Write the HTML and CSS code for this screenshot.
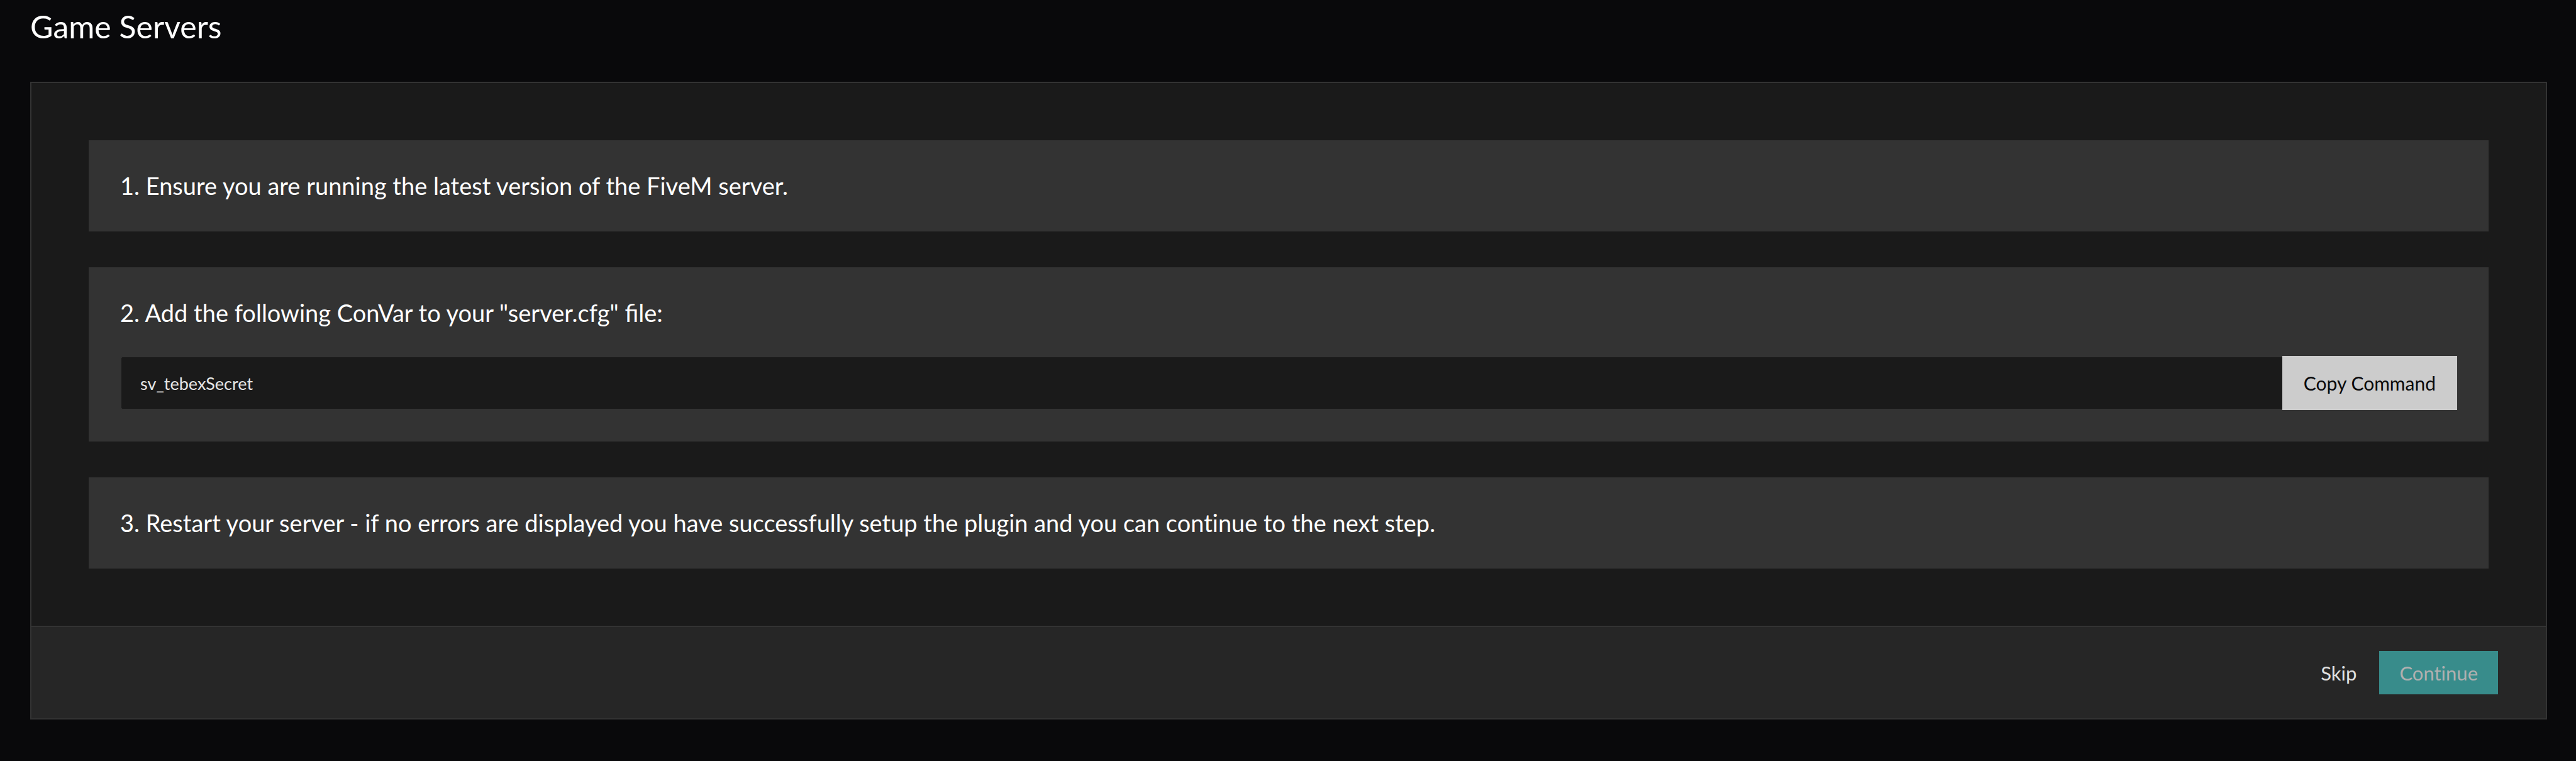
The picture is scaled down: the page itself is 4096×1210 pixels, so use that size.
FILE: index.html
```html
<!DOCTYPE html>
<html lang="en">
<head>
<meta charset="utf-8">
<title>Game Servers</title>
<link rel="stylesheet" href="styles.css">
</head>
<body>
<main class="page">
  <h1 class="page-title">Game Servers</h1>
  <section class="card">
    <div class="card-body">
      <div class="step">
        <p class="step-text">1. Ensure you are running the latest version of the FiveM server.</p>
      </div>
      <div class="step">
        <label class="step-text step-label" for="convar">2. Add the following ConVar to your "server.cfg" file:</label>
        <div class="command">
          <input class="command-input" id="convar" type="text" value="sv_tebexSecret" readonly>
          <button class="command-copy" type="button">Copy Command</button>
        </div>
      </div>
      <div class="step">
        <p class="step-text">3. Restart your server - if no errors are displayed you have successfully setup the plugin and you can continue to the next step.</p>
      </div>
    </div>
    <footer class="card-footer">
      <a class="skip" href="#">Skip</a>
      <button class="continue" type="button" disabled>Continue</button>
    </footer>
  </section>
</main>
</body>
</html>
```
FILE: styles.css
```css
* {
  box-sizing: border-box;
}

body {
  margin: 0;
  background: #09090b;
  color: #fff;
  font-family: Lato, sans-serif;
  font-variant-ligatures: none;
}

.page {
  padding: 12px 46px 64px 48px;
}

.page-title {
  margin: 0 0 58px;
  font-size: 50px;
  line-height: 60px;
  font-weight: 400;
}

.card {
  border: 2px solid #333;
  background: #1a1a1a;
}

.card-body {
  display: flex;
  flex-direction: column;
  gap: 57px;
  padding: 91px;
}

.step {
  display: flex;
  flex-direction: column;
  gap: 46px;
  padding: 50px;
  background: #333;
}

.step-text {
  margin: 0;
  font-size: 38px;
  line-height: 45px;
}

.step-label {
  font-variant-ligatures: normal;
}

.command {
  display: flex;
}

.command-input {
  flex: 1;
  min-width: 0;
  height: 86px;
  padding: 0 30px;
  border: 2px solid #333;
  border-right: 0;
  border-radius: 4px 0 0 4px;
  background: #1a1a1a;
  color: #e6e6e6;
  font: 27px Lato, sans-serif;
}

.command-copy {
  padding: 0 34px;
  border: 0;
  background: #ccc;
  color: #09090b;
  font: 30px Lato, sans-serif;
}

.card-footer {
  display: flex;
  justify-content: flex-end;
  align-items: center;
  gap: 36px;
  padding: 38px 76px;
  border-top: 2px solid #333;
  background: #262626;
}

.skip {
  color: #e0e0e0;
  font-size: 31px;
  text-decoration: none;
}

.continue {
  height: 69px;
  padding: 0 32px;
  border: 0;
  background: #388c8b;
  color: #b0b0b0;
  font: 31px Lato, sans-serif;
  font-variant-ligatures: none;
}
```
